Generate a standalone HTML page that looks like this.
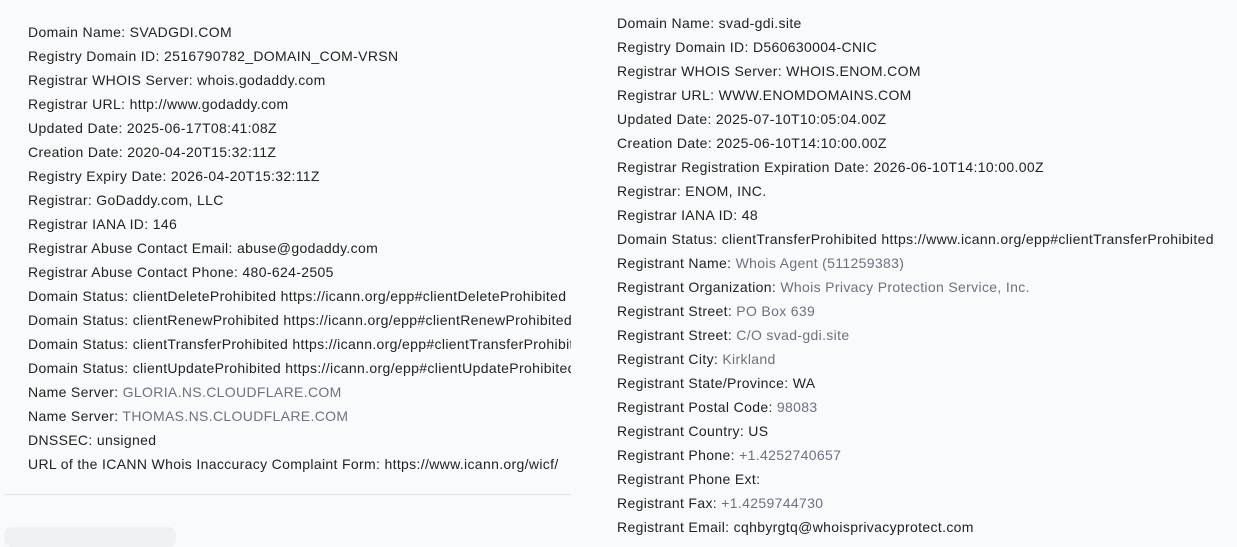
<!DOCTYPE html>
<html><head><meta charset="utf-8"><style>
html,body{margin:0;padding:0;background:#f9fafb;width:1237px;height:536px;overflow:hidden}
body{font-family:"Liberation Sans",Arial,sans-serif;font-size:14px;letter-spacing:0.34px;color:#222}
.col{position:absolute;white-space:nowrap;overflow:hidden}
.l{left:28px;top:21px;width:543px}
.r{left:617px;top:12px;width:620px}
.col div{height:24px;line-height:22px}
.g{color:#6b7280}
.hr{position:absolute;left:4px;top:494px;width:567px;height:1px;background:#e2e4e8}
.pill{position:absolute;left:4px;top:527px;width:172px;height:20px;border-radius:8px;background:#f0f1f3}
</style></head><body>
<div class="col l">
<div>Domain Name: SVADGDI.COM</div>
<div>Registry Domain ID: 2516790782_DOMAIN_COM-VRSN</div>
<div>Registrar WHOIS Server: whois.godaddy.com</div>
<div>Registrar URL: http://www.godaddy.com</div>
<div>Updated Date: 2025-06-17T08:41:08Z</div>
<div>Creation Date: 2020-04-20T15:32:11Z</div>
<div>Registry Expiry Date: 2026-04-20T15:32:11Z</div>
<div>Registrar: GoDaddy.com, LLC</div>
<div>Registrar IANA ID: 146</div>
<div>Registrar Abuse Contact Email: abuse@godaddy.com</div>
<div>Registrar Abuse Contact Phone: 480-624-2505</div>
<div>Domain Status: clientDeleteProhibited https://icann.org/epp#clientDeleteProhibited</div>
<div>Domain Status: clientRenewProhibited https://icann.org/epp#clientRenewProhibited</div>
<div>Domain Status: clientTransferProhibited https://icann.org/epp#clientTransferProhibited</div>
<div>Domain Status: clientUpdateProhibited https://icann.org/epp#clientUpdateProhibited</div>
<div>Name Server: <span class="g">GLORIA.NS.CLOUDFLARE.COM</span></div>
<div>Name Server: <span class="g">THOMAS.NS.CLOUDFLARE.COM</span></div>
<div>DNSSEC: unsigned</div>
<div>URL of the ICANN Whois Inaccuracy Complaint Form: https://www.icann.org/wicf/</div>
</div>
<div class="hr"></div>
<div class="pill"></div>
<div class="col r">
<div>Domain Name: svad-gdi.site</div>
<div>Registry Domain ID: D560630004-CNIC</div>
<div>Registrar WHOIS Server: WHOIS.ENOM.COM</div>
<div>Registrar URL: WWW.ENOMDOMAINS.COM</div>
<div>Updated Date: 2025-07-10T10:05:04.00Z</div>
<div>Creation Date: 2025-06-10T14:10:00.00Z</div>
<div>Registrar Registration Expiration Date: 2026-06-10T14:10:00.00Z</div>
<div>Registrar: ENOM, INC.</div>
<div>Registrar IANA ID: 48</div>
<div>Domain Status: clientTransferProhibited https://www.icann.org/epp#clientTransferProhibited</div>
<div>Registrant Name: <span class="g">Whois Agent (511259383)</span></div>
<div>Registrant Organization: <span class="g">Whois Privacy Protection Service, Inc.</span></div>
<div>Registrant Street: <span class="g">PO Box 639</span></div>
<div>Registrant Street: <span class="g">C/O svad-gdi.site</span></div>
<div>Registrant City: <span class="g">Kirkland</span></div>
<div>Registrant State/Province: WA</div>
<div>Registrant Postal Code: <span class="g">98083</span></div>
<div>Registrant Country: US</div>
<div>Registrant Phone: <span class="g">+1.4252740657</span></div>
<div>Registrant Phone Ext:</div>
<div>Registrant Fax: <span class="g">+1.4259744730</span></div>
<div>Registrant Email: cqhbyrgtq@whoisprivacyprotect.com</div>
</div>
</body></html>
